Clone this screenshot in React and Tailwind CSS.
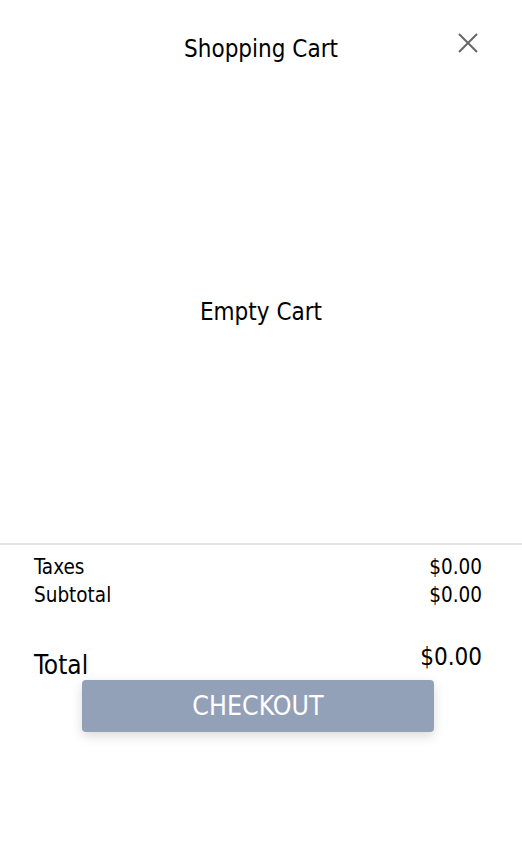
import React from 'react';

const App = () => {
  return (
    <div className="w-[522px] h-[859px] bg-white text-black" style={{ fontFamily: '"DejaVu Sans Condensed", "DejaVu Sans", sans-serif' }}>
      {/* Header */}
      <div className="relative h-[80px] pt-[35px]">
        <h1 className="text-center text-[24px] leading-[28px] font-normal">Shopping Cart</h1>
        <button className="absolute right-[43px] top-[32px] w-[22px] h-[22px] text-[#666666]" aria-label="Close">
          <svg viewBox="0 0 22 22" width="22" height="22" fill="none" stroke="currentColor" strokeWidth="2">
            <path d="M2 2 L20 20 M20 2 L2 20" />
          </svg>
        </button>
      </div>

      {/* Body */}
      <div className="h-[463px] flex items-center justify-center">
        <p className="text-[24px] leading-[28px]">Empty Cart</p>
      </div>

      {/* Summary */}
      <div className="border-t-2 border-[#e3e3e3] pl-[34px] pr-[40px] pt-[8px]">
        <div className="flex justify-between text-[20.5px] leading-[28px]">
          <span>Taxes</span>
          <span>$0.00</span>
        </div>
        <div className="flex justify-between text-[20.5px] leading-[28px]">
          <span>Subtotal</span>
          <span>$0.00</span>
        </div>
        <div className="flex justify-between h-[38px] mt-[33px] leading-[30px]">
          <span className="self-end text-[26px]">Total</span>
          <span className="self-start text-[24px]">$0.00</span>
        </div>
        <button className="ml-[48px] w-[352px] h-[52px] rounded-[4px] bg-[#93a1b8] text-white text-[26.5px] shadow-[0_4px_12px_rgba(0,0,0,0.15)]">
          CHECKOUT
        </button>
      </div>
    </div>
  );
};

export default App;
